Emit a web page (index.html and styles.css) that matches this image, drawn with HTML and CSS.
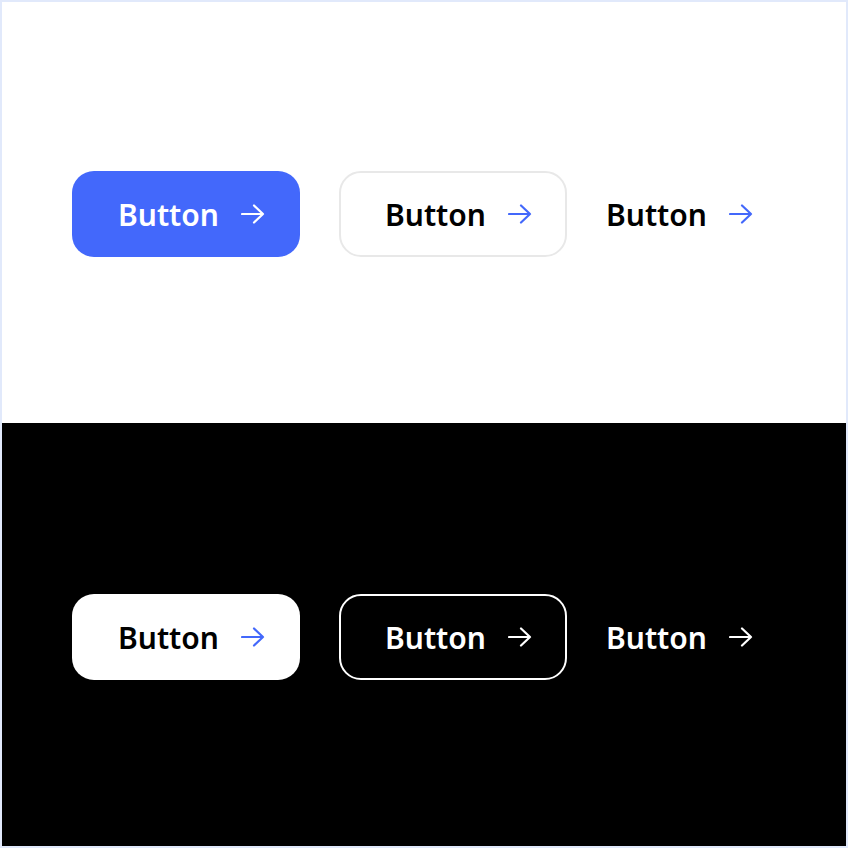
FILE: index.html
```html
<!DOCTYPE html>
<html lang="en">
<head>
    <meta charset="UTF-8">
    <meta name="viewport" content="width=device-width, initial-scale=1.0">
    <title>Buttons</title>
    <link rel="stylesheet" href="styles.css">
</head>
<body>
    <div class="frame">
        <section class="panel panel-light">
            <a class="btn btn-primary" href="#">
                <span>Button</span>
                <svg class="arrow" viewBox="0 0 24 20"><path d="M1 10H22M13 1.5L22 10L13 18.5"/></svg>
            </a>
            <a class="btn btn-outline" href="#">
                <span>Button</span>
                <svg class="arrow" viewBox="0 0 24 20"><path d="M1 10H22M13 1.5L22 10L13 18.5"/></svg>
            </a>
            <a class="btn btn-text" href="#">
                <span>Button</span>
                <svg class="arrow" viewBox="0 0 24 20"><path d="M1 10H22M13 1.5L22 10L13 18.5"/></svg>
            </a>
        </section>

        <section class="panel panel-dark">
            <a class="btn btn-primary" href="#">
                <span>Button</span>
                <svg class="arrow" viewBox="0 0 24 20"><path d="M1 10H22M13 1.5L22 10L13 18.5"/></svg>
            </a>
            <a class="btn btn-outline" href="#">
                <span>Button</span>
                <svg class="arrow" viewBox="0 0 24 20"><path d="M1 10H22M13 1.5L22 10L13 18.5"/></svg>
            </a>
            <a class="btn btn-text" href="#">
                <span>Button</span>
                <svg class="arrow" viewBox="0 0 24 20"><path d="M1 10H22M13 1.5L22 10L13 18.5"/></svg>
            </a>
        </section>
    </div>
</body>
</html>
```

FILE: styles.css
```css
* {
    margin: 0;
    padding: 0;
    box-sizing: border-box;
}

body {
    font-family: 'Noto Sans', 'Open Sans', sans-serif;
    background-color: #fff;
    width: 848px;
    height: 848px;
}

.frame {
    display: flex;
    flex-direction: column;
    height: 100%;
    border: 2px solid #e1e9fb;
}

.panel {
    display: flex;
    align-items: center;
    gap: 39px;
    padding-left: 70px;
}

.panel-light {
    flex: 0 0 421px;
    background-color: #fff;
    padding-top: 2px;
}

.panel-dark {
    flex: 1;
    background-color: #000;
    padding-top: 4px;
}

.btn {
    display: flex;
    align-items: center;
    gap: 22px;
    font-size: 30px;
    font-weight: 600;
    text-decoration: none;
    line-height: 1;
}

.btn span {
    padding-top: 2px;
}

.btn-primary,
.btn-outline {
    width: 228px;
    height: 86px;
    padding-left: 46px;
    border-radius: 22px;
}

.arrow {
    width: 24px;
    height: 20px;
    fill: none;
    stroke-width: 2.2;
    stroke-linecap: round;
    stroke-linejoin: round;
}

/* light */
.panel-light .btn-primary {
    background-color: #4368fb;
    color: #fff;
}

.panel-light .btn-primary .arrow {
    stroke: #fff;
}

.panel-light .btn-outline {
    border: 2px solid #e8e8e8;
    padding-left: 44px;
    color: #000;
}

.panel-light .btn-text {
    color: #000;
}

.panel-light .btn-outline .arrow,
.panel-light .btn-text .arrow {
    stroke: #4368fb;
}

/* dark */
.panel-dark .btn-primary {
    background-color: #fff;
    color: #000;
}

.panel-dark .btn-primary .arrow {
    stroke: #4368fb;
}

.panel-dark .btn-outline {
    border: 2px solid #fff;
    padding-left: 44px;
    color: #fff;
}

.panel-dark .btn-text {
    color: #fff;
}

.panel-dark .btn-outline .arrow,
.panel-dark .btn-text .arrow {
    stroke: #fff;
}
```
